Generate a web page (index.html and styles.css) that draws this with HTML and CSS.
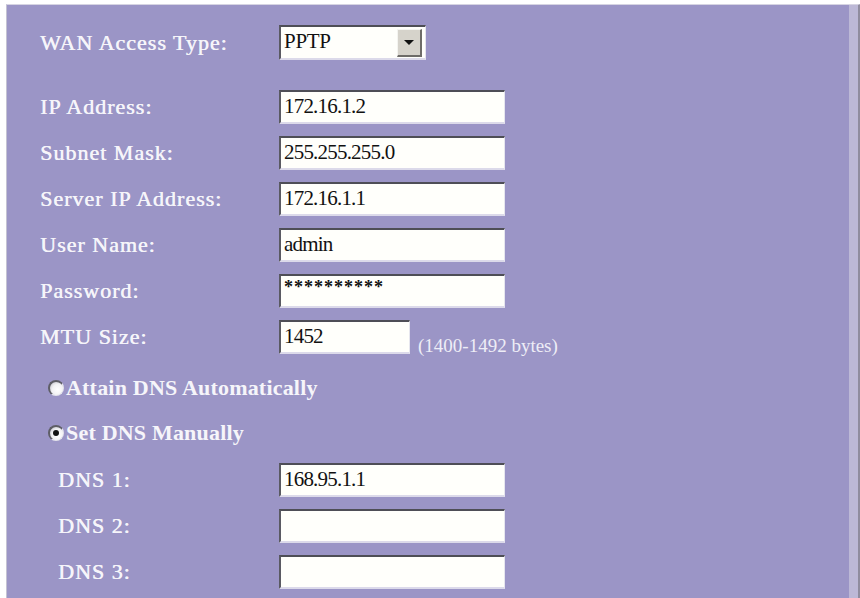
FILE: index.html
```html
<!DOCTYPE html>
<html lang="en">
<head>
    <meta charset="UTF-8">
    <title>WAN Setup</title>
    <link rel="stylesheet" href="styles.css">
</head>
<body>
    <div class="frame">
        <div class="panel">
            <div class="row row-type">
                <div class="label">WAN Access Type:</div>
                <div class="select">
                    <span class="select-text">PPTP</span>
                    <span class="select-btn"><span class="arrow"></span></span>
                </div>
            </div>

            <div class="row">
                <div class="label">IP Address:</div>
                <input class="field" type="text" value="172.16.1.2">
            </div>
            <div class="row">
                <div class="label">Subnet Mask:</div>
                <input class="field" type="text" value="255.255.255.0">
            </div>
            <div class="row">
                <div class="label">Server IP Address:</div>
                <input class="field" type="text" value="172.16.1.1">
            </div>
            <div class="row">
                <div class="label">User Name:</div>
                <input class="field" type="text" value="admin">
            </div>
            <div class="row">
                <div class="label">Password:</div>
                <input class="field pass" type="text" value="**********">
            </div>
            <div class="row">
                <div class="label">MTU Size:</div>
                <input class="field short" type="text" value="1452">
                <span class="hint">(1400-1492 bytes)</span>
            </div>

            <div class="radio-row first">
                <span class="radio"></span>
                <span class="radio-label">Attain DNS Automatically</span>
            </div>
            <div class="radio-row">
                <span class="radio checked"></span>
                <span class="radio-label">Set DNS Manually</span>
            </div>

            <div class="row dns">
                <div class="label">DNS 1:</div>
                <input class="field" type="text" value="168.95.1.1">
            </div>
            <div class="row dns">
                <div class="label">DNS 2:</div>
                <input class="field" type="text" value="">
            </div>
            <div class="row dns">
                <div class="label">DNS 3:</div>
                <input class="field" type="text" value="">
            </div>
        </div>
    </div>
</body>
</html>
```

FILE: styles.css
```css
html, body {
    margin: 0;
    padding: 0;
    background: #ffffff;
    height: 598px;
    overflow: hidden;
}
.frame {
    margin: 4px 0 0 6px;
    height: 594px;
    width: 851px;
    border-top: 1px solid #d6d4e2;
    border-left: 1px solid #c4c2d2;
    border-right: 3px solid #8f8c9e;
    background: #bcb8d6;
}
.panel {
    width: 842px;
    height: 100%;
    background: #9b95c6;
    padding: 20px 0 0 33px;
    box-sizing: border-box;
    font-family: "Liberation Serif", "Times New Roman", serif;
    color: #f6f5fa;
}
.row {
    display: flex;
    align-items: center;
    height: 34px;
    margin-bottom: 12px;
}
.row-type {
    height: 35px;
    margin-bottom: 30px;
}
.label {
    width: 239px;
    flex-shrink: 0;
    font-size: 22px;
    letter-spacing: 1px;
    text-shadow: 0.5px 0 0 #f6f5fa;
}
.row.dns .label {
    padding-left: 18px;
    width: 221px;
}
.field {
    width: 226px;
    height: 34px;
    flex-shrink: 0;
    box-sizing: border-box;
    margin: 0;
    padding: 0 0 2px 3px;
    background: #fffffb;
    border-top: 2px solid #4e4e56;
    border-left: 2px solid #5a5a62;
    border-right: 1px solid #e6e6ee;
    border-bottom: 2px solid #dcdaea;
    font-family: "Liberation Serif", "Times New Roman", serif;
    font-size: 21px;
    letter-spacing: -0.8px;
    color: #111;
    outline: none;
}
.field.pass {
    font-size: 18px;
    font-weight: bold;
    letter-spacing: 1px;
    padding-bottom: 8px;
}
.field.short {
    width: 131px;
}
.hint {
    align-self: flex-end;
    margin-left: 8px;
    margin-bottom: -3px;
    font-size: 19px;
    color: #eeedf6;
}
.select {
    display: flex;
    align-items: center;
    justify-content: space-between;
    width: 147px;
    height: 35px;
    box-sizing: border-box;
    background: #fffffb;
    border-top: 2px solid #4e4e56;
    border-left: 2px solid #5a5a62;
    border-right: 1px solid #e6e6ee;
    border-bottom: 2px solid #dcdaea;
    padding: 0 3px 0 3px;
}
.select-text {
    font-size: 21px;
    color: #111;
    letter-spacing: -0.3px;
    margin-bottom: 2px;
}
.select-btn {
    display: flex;
    align-items: center;
    justify-content: center;
    width: 25px;
    height: 28px;
    box-sizing: border-box;
    background: #d6d3cb;
    border-top: 1px solid #f4f4f0;
    border-left: 1px solid #f4f4f0;
    border-right: 2px solid #6e6c68;
    border-bottom: 2px solid #6e6c68;
}
.arrow {
    width: 0;
    height: 0;
    border-left: 5px solid transparent;
    border-right: 5px solid transparent;
    border-top: 5px solid #111;
}
.radio-row {
    display: flex;
    align-items: center;
    height: 30px;
    margin-left: 8px;
    margin-bottom: 15px;
}
.radio-row.first {
    margin-top: 19px;
}
.radio-row:last-of-type {
    margin-bottom: 16px;
}
.radio {
    position: relative;
    flex-shrink: 0;
    width: 16px;
    height: 16px;
    box-sizing: border-box;
    border-radius: 50%;
    background: radial-gradient(circle at 60% 60%, #ffffff 0, #f2f2f4 50%, #b8b8c0 100%);
    border-top: 2px solid #5e5e66;
    border-left: 2px solid #5e5e66;
    border-right: 1px solid #e4e4ec;
    border-bottom: 1px solid #e4e4ec;
    margin-right: 2px;
}
.radio.checked::after {
    content: "";
    position: absolute;
    left: 3px;
    top: 3px;
    width: 6px;
    height: 6px;
    border-radius: 50%;
    background: #111;
}
.radio-label {
    font-size: 22px;
    font-weight: bold;
    letter-spacing: 0.2px;
}
```
